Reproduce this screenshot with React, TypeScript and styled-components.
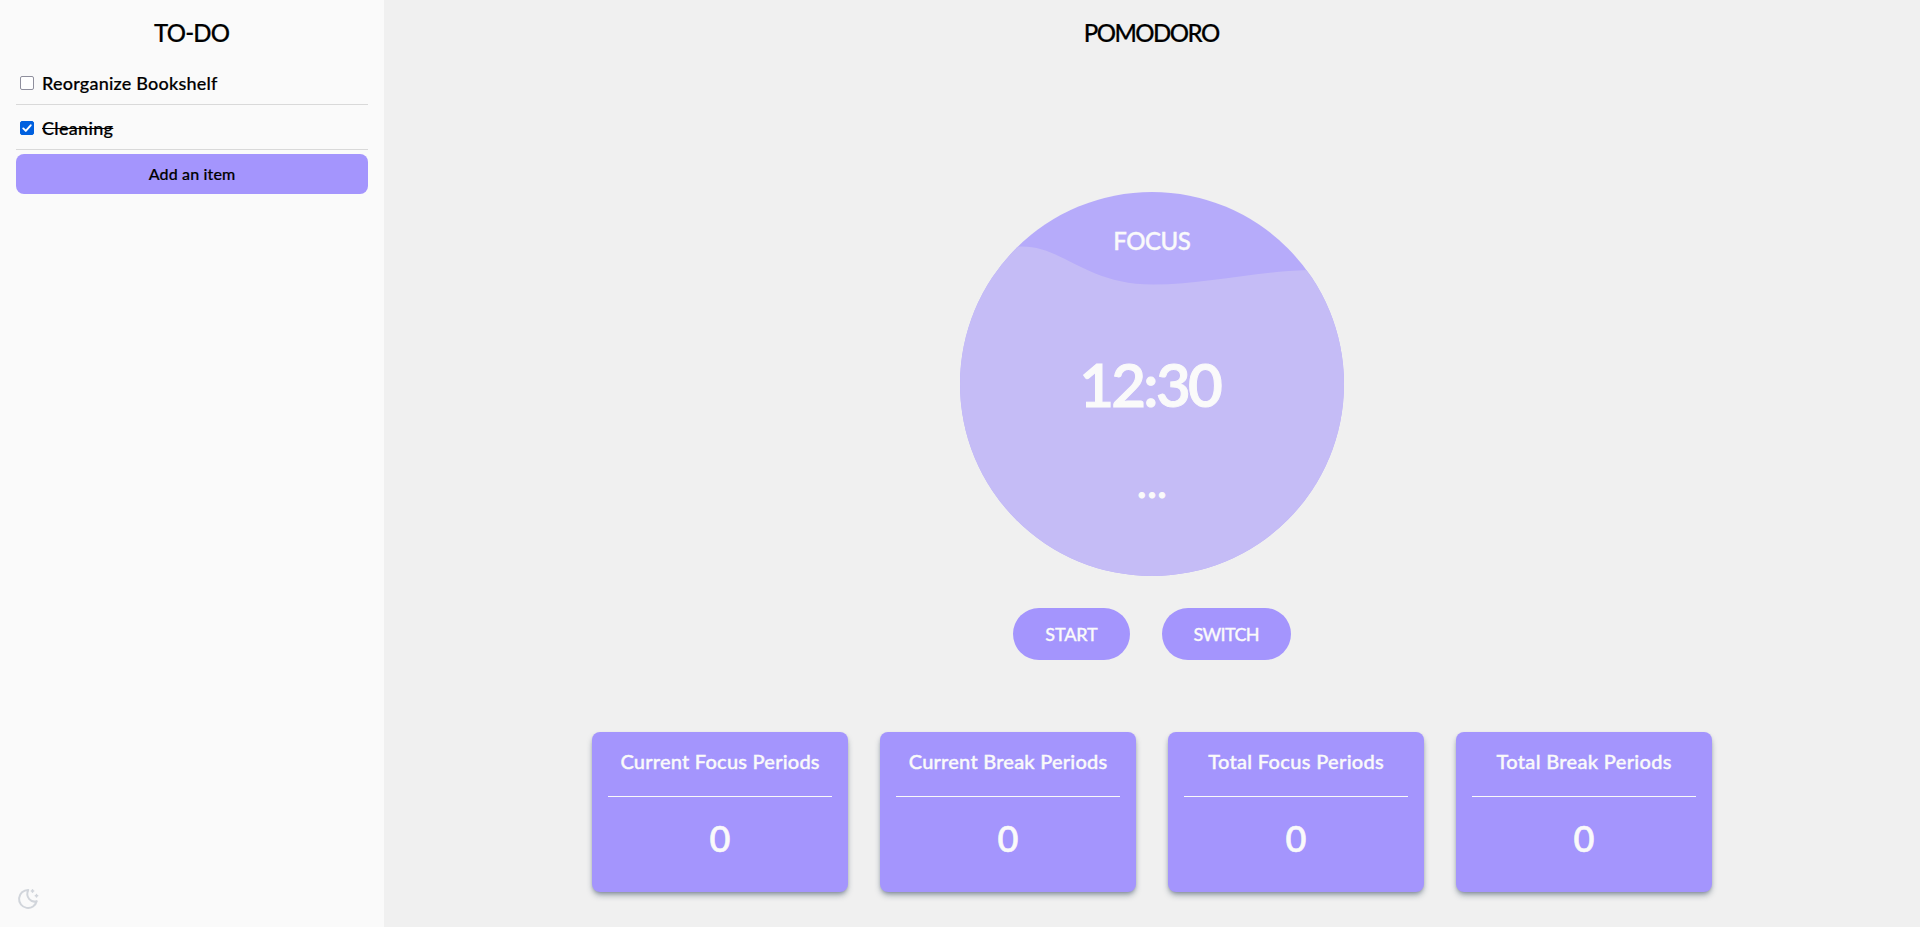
import React, { useState } from 'react';
import styled, { createGlobalStyle } from 'styled-components';

const GlobalStyle = createGlobalStyle`
  *, *::before, *::after { box-sizing: border-box; }
  body {
    margin: 0;
    font-family: Lato, "Open Sans", sans-serif;
    font-weight: 500;
    color: #000;
    background: #f0f0f0;
  }
  h1, h2, h3, p, ul { margin: 0; padding: 0; font-weight: inherit; }
  button { font: inherit; border: 0; cursor: pointer; }
`;

const Page = styled.div`
  display: flex;
  height: 100vh;
  overflow: hidden;
`;

const Sidebar = styled.aside`
  display: flex;
  flex-direction: column;
  width: 384px;
  flex: none;
  padding: 16px;
  background: #fafafa;
`;

const Label = styled.span<{ $spacing?: number; $stroke?: number }>`
  letter-spacing: ${(p) => p.$spacing ?? 0}px;
  margin-right: ${(p) => -(p.$spacing ?? 0)}px;
  -webkit-text-stroke: ${(p) => p.$stroke ?? 0.2}px currentColor;
  white-space: nowrap;
`;

const Heading = styled.h1`
  font-size: 24px;
  line-height: 32px;
  padding-top: 1px;
  text-align: center;
`;

const TodoList = styled.ul`
  list-style: none;
  padding-top: 11px;
`;

const TodoItem = styled.li<{ $done: boolean }>`
  display: flex;
  align-items: center;
  gap: 8px;
  height: 45px;
  padding: 1px 4px 0;
  border-bottom: 1px solid #d9d9d9;
  font-size: 18px;
  line-height: 22px;
  text-decoration: ${(p) => (p.$done ? 'line-through' : 'none')};
`;

const Checkbox = styled.button<{ $checked: boolean }>`
  display: grid;
  place-items: center;
  width: 14px;
  height: 14px;
  padding: 0;
  border: 1px solid ${(p) => (p.$checked ? '#0060df' : '#8f8f9d')};
  border-radius: 2px;
  background: ${(p) => (p.$checked ? '#0060df' : '#fff')};
`;

const AddButton = styled.button`
  height: 40px;
  margin-top: 4px;
  flex: none;
  border-radius: 8px;
  background: #a495fd;
  color: #000;
  font-size: 16px;
  padding: 0 0 1px;
`;

const ThemeToggle = styled.button`
  display: flex;
  align-self: flex-start;
  margin-top: auto;
  padding: 0;
  background: none;
  color: #d1d5db;
`;

const Main = styled.main`
  display: flex;
  flex-direction: column;
  align-items: center;
  flex: 1;
  padding-top: 16px;
`;

const Timer = styled.section`
  display: grid;
  width: 384px;
  height: 384px;
  margin-top: 143px;
  border-radius: 50%;
  overflow: hidden;
  background: #b6abfa;
  color: #fafafa;
  & > * { grid-area: 1 / 1; }
`;

const TimerContent = styled.div`
  z-index: 1;
  display: flex;
  flex-direction: column;
  align-items: center;
`;

const Mode = styled.h2`
  font-size: 24px;
  line-height: 32px;
  padding-top: 33px;
`;

const Time = styled.p`
  font-size: 60px;
  line-height: 60px;
  margin-top: 97px;
  padding-right: 2px;
  font-weight: 600;
`;

const MoreButton = styled.button`
  margin-top: 54px;
  padding: 0;
  background: none;
  color: inherit;
  font-size: 36px;
  font-weight: 700;
  line-height: 32px;
`;

const Controls = styled.div`
  display: flex;
  gap: 32px;
  margin-top: 32px;
`;

const PillButton = styled.button<{ $width: number }>`
  width: ${(p) => p.$width}px;
  height: 52px;
  padding: 0;
  border-radius: 26px;
  background: #a495fd;
  color: #fafafa;
  font-size: 18px;
`;

const Stats = styled.div`
  display: grid;
  grid-template-columns: repeat(4, 256px);
  gap: 32px;
  margin-top: 72px;
`;

const StatCard = styled.article`
  height: 160px;
  padding: 0 16px;
  border-radius: 8px;
  background: #a495fd;
  color: #fafafa;
  text-align: center;
  box-shadow: 0 4px 6px -1px rgba(31, 51, 75, 0.4), 0 2px 4px -2px rgba(31, 51, 75, 0.4);
`;

const StatTitle = styled.h3`
  height: 65px;
  padding-top: 15px;
  border-bottom: 1px solid #fafafa;
  font-size: 20px;
  line-height: 28px;
`;

const StatValue = styled.p`
  padding-top: 21px;
  font-size: 36px;
  line-height: 40px;
`;

const stats = [
  { title: 'Current Focus Periods', spacing: 0.23, value: 0 },
  { title: 'Current Break Periods', spacing: 0.23, value: 0 },
  { title: 'Total Focus Periods', spacing: 0.33, value: 0 },
  { title: 'Total Break Periods', spacing: 0.33, value: 0 },
];

const MoonIcon = () => (
  <svg width="24" height="24" viewBox="0 0 24 24" fill="none" stroke="currentColor" strokeLinejoin="round" strokeLinecap="round">
    <path strokeWidth="2" d="M12.2 3A9 9 0 1 0 20.8 14.1C15.4 16.2 9 10.4 12.2 3Z" />
    <path strokeWidth="1.5" d="M16.5 2.8V5.2M15.3 4H17.7M20.5 7.6V10M19.3 8.8H21.7" />
  </svg>
);

export default function App() {
  const [todos, setTodos] = useState([
    { text: 'Reorganize Bookshelf', done: false, spacing: 0.22 },
    { text: 'Cleaning', done: true, spacing: 0.32 },
  ]);
  const toggle = (index: number) =>
    setTodos(todos.map((t, i) => (i === index ? { ...t, done: !t.done } : t)));

  return (
    <Page>
      <GlobalStyle />
      <Sidebar>
        <Heading><Label $spacing={-0.8}>TO-DO</Label></Heading>
        <TodoList>
          {todos.map((todo, i) => (
            <TodoItem key={todo.text} $done={todo.done}>
              <Checkbox $checked={todo.done} onClick={() => toggle(i)} aria-label={todo.text}>
                {todo.done && (
                  <svg width="10" height="10" viewBox="0 0 10 10" fill="none" stroke="#fff" strokeWidth="1.9" strokeLinecap="round" strokeLinejoin="round">
                    <path d="M1.3 5.4 3.8 7.9 8.7 2.3" />
                  </svg>
                )}
              </Checkbox>
              <Label $spacing={todo.spacing}>{todo.text}</Label>
            </TodoItem>
          ))}
        </TodoList>
        <AddButton><Label $spacing={0.15}>Add an item</Label></AddButton>
        <ThemeToggle aria-label="Toggle theme"><MoonIcon /></ThemeToggle>
      </Sidebar>
      <Main>
        <Heading><Label $spacing={-1.5}>POMODORO</Label></Heading>
        <Timer>
          <svg width="384" height="384" viewBox="0 0 384 384">
            <path fill="#c5bcf6" d="M0 60C20 56 40 55 58 54.7C102 52 124 92.5 193 92.5C245 92.5 290 80 348 78L384 77V384H0Z" />
          </svg>
          <TimerContent>
            <Mode><Label $spacing={-0.5} $stroke={0.4}>FOCUS</Label></Mode>
            <Time><Label $spacing={-2.7} $stroke={1}>12:30</Label></Time>
            <MoreButton aria-label="More"><Label $spacing={1.6} $stroke={1}>...</Label></MoreButton>
          </TimerContent>
        </Timer>
        <Controls>
          <PillButton $width={117}><Label $spacing={-0.2} $stroke={0.3}>START</Label></PillButton>
          <PillButton $width={129}><Label $spacing={-0.7} $stroke={0.3}>SWITCH</Label></PillButton>
        </Controls>
        <Stats>
          {stats.map((s) => (
            <StatCard key={s.title}>
              <StatTitle><Label $spacing={s.spacing} $stroke={0.4}>{s.title}</Label></StatTitle>
              <StatValue><Label $stroke={0.7}>{s.value}</Label></StatValue>
            </StatCard>
          ))}
        </Stats>
      </Main>
    </Page>
  );
}
